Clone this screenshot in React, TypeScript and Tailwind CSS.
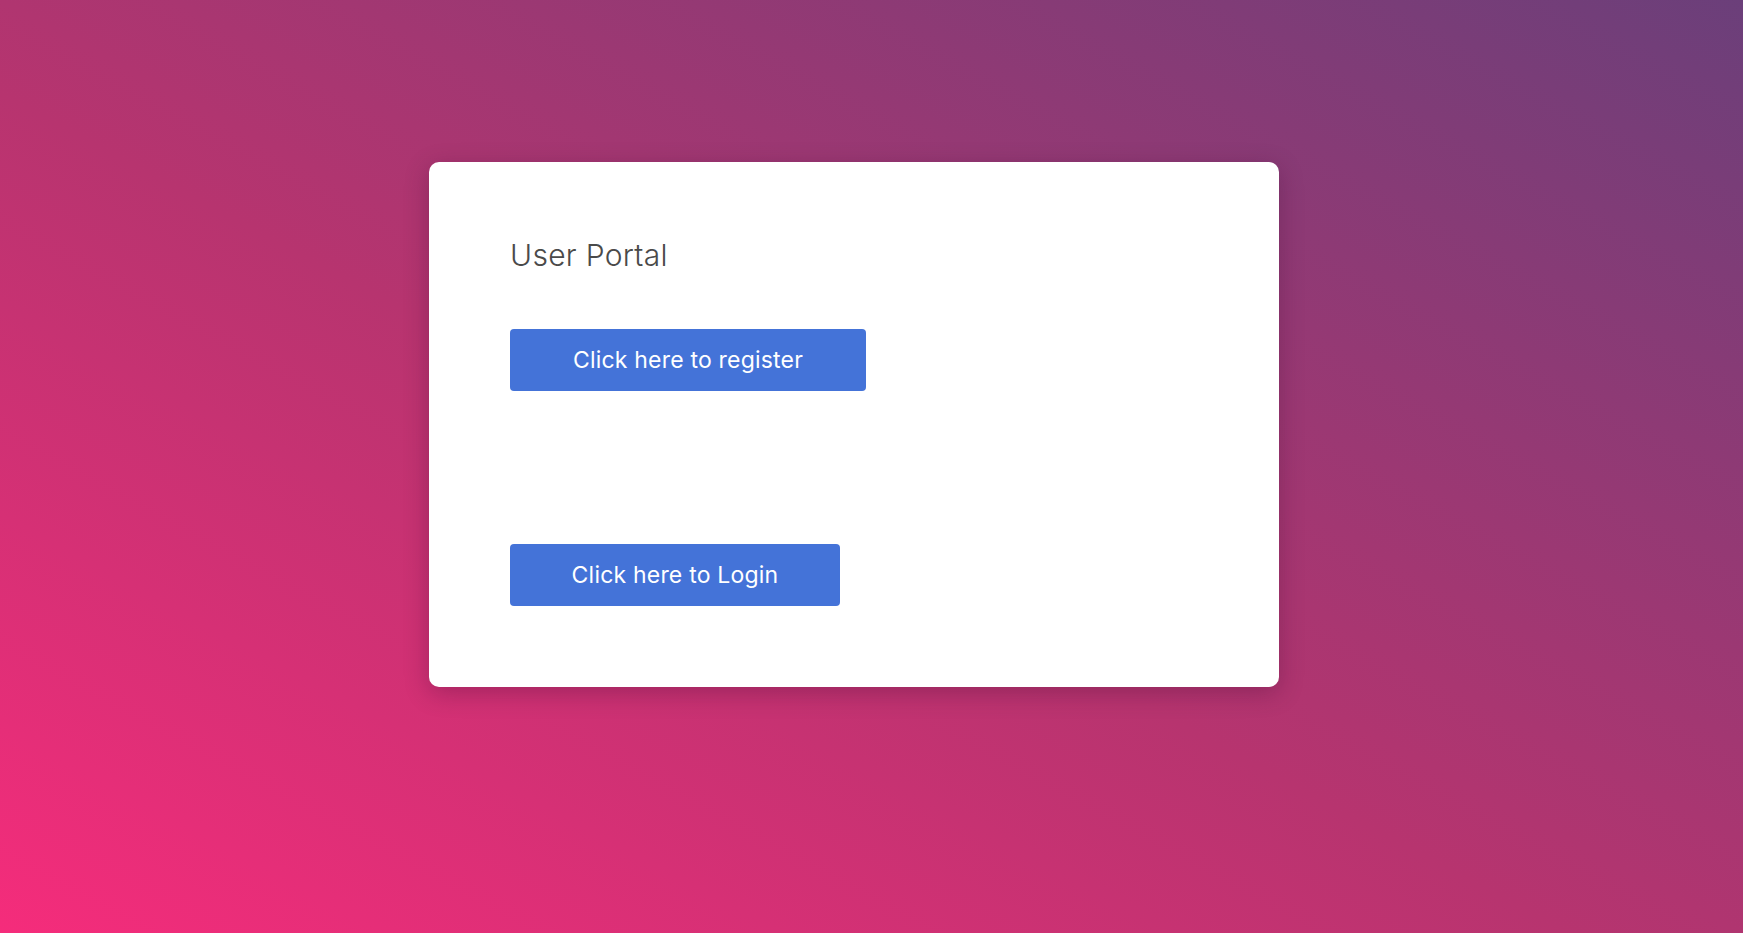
export default function App() {
  return (
    <div className="min-h-[933px] w-full bg-[linear-gradient(to_top_right,#f52c7b_0%,#b7346f_45%,#6b3f7a_100%)] pl-[429px] pt-[162px] font-['Inter','Liberation_Sans',sans-serif]">
      {/* Portal card */}
      <div className="w-[850px] h-[525px] rounded-[10px] bg-white shadow-[0_6px_24px_rgba(60,10,50,0.3)] pl-[81px] pt-[73px]">
        <h1 className="text-[30px] leading-[40px] font-light text-[#4a4a4a] tracking-[0.3px]">User Portal</h1>

        <button className="mt-[54px] flex h-[62px] w-[356px] items-center justify-center rounded-[4px] bg-[#4473d8] text-[23px] text-white tracking-[0.2px]">
          Click here to register
        </button>

        <button className="mt-[153px] flex h-[62px] w-[330px] items-center justify-center rounded-[4px] bg-[#4473d8] text-[23px] text-white tracking-[0.2px]">
          Click here to Login
        </button>
      </div>
    </div>
  );
}
